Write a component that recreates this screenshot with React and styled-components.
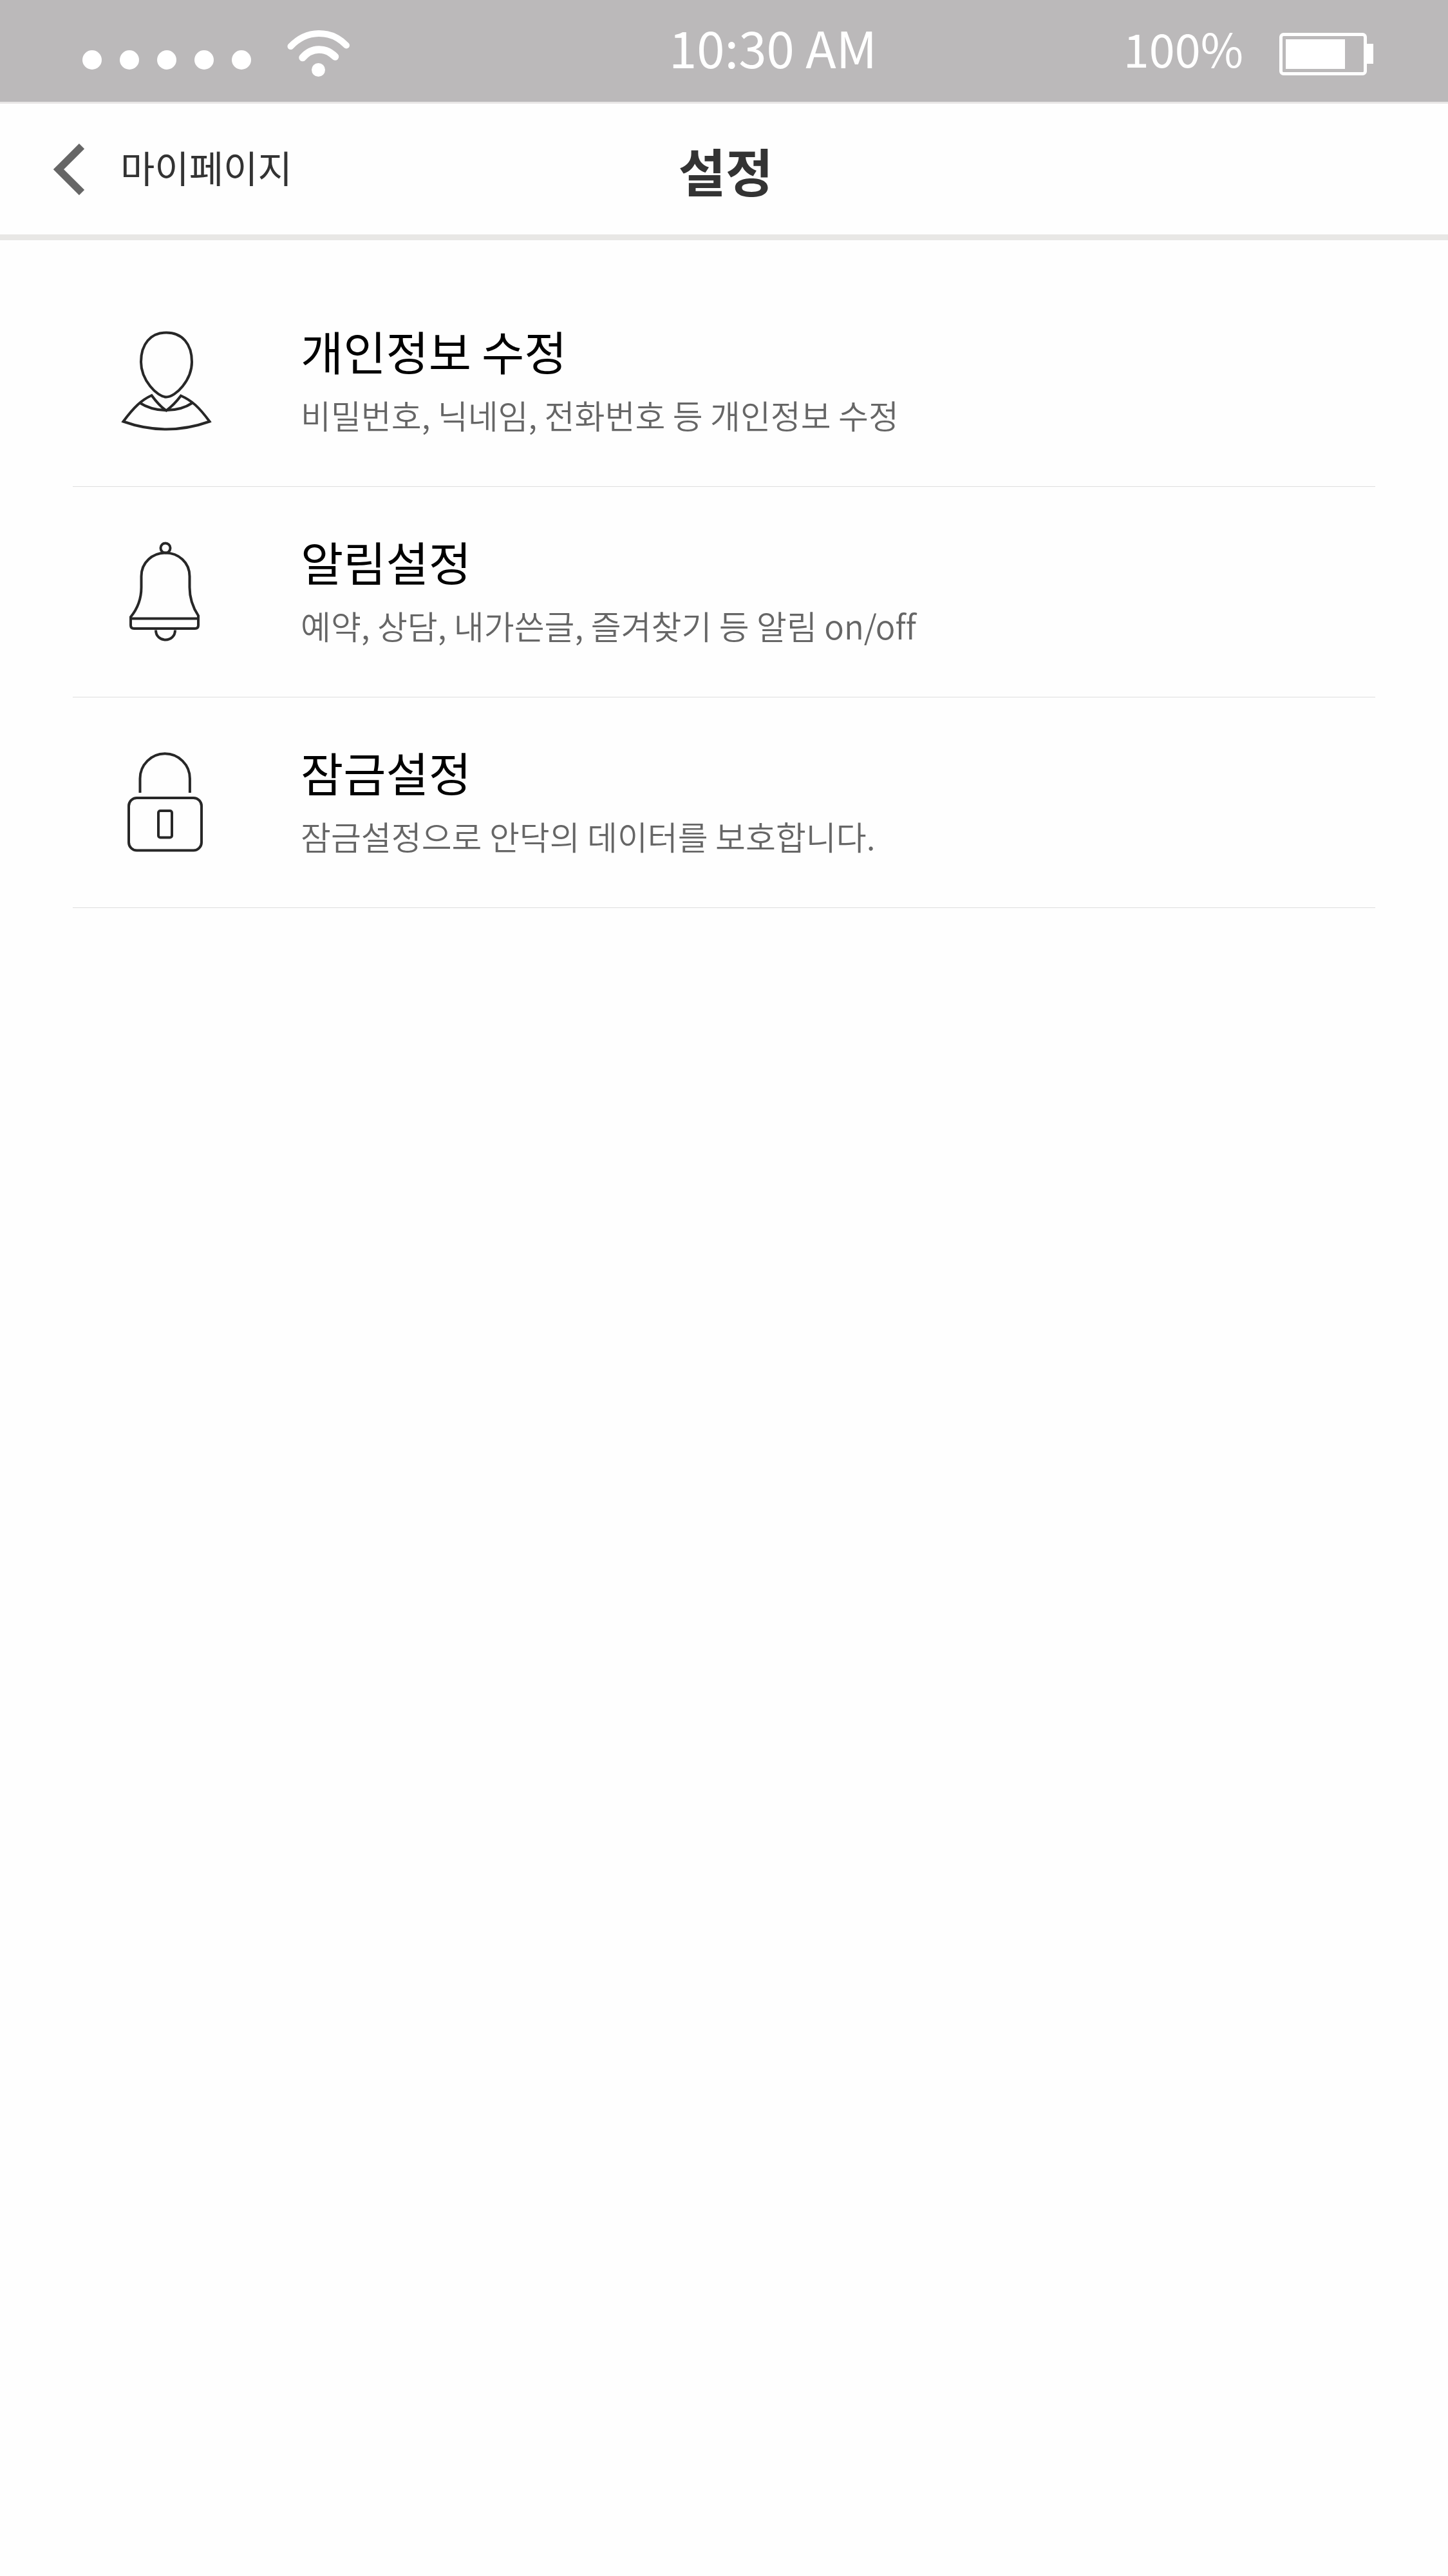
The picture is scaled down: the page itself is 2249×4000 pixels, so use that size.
import React from "react";
import styled, { createGlobalStyle } from "styled-components";

const GlobalStyle = createGlobalStyle`
  *, *::before, *::after { box-sizing: border-box; }
  body {
    margin: 0;
    background: #fefefe;
    color: #000;
    font-family: "Noto Sans CJK KR", "Noto Sans", sans-serif;
    font-variant-ligatures: none;
  }
`;

const Page = styled.div`
  min-height: 100vh;
`;

const StatusBar = styled.div`
  display: grid;
  grid-template-columns: 13fr auto 11fr;
  align-items: center;
  height: 161px;
  padding: 0 116px 0 128px;
  background: #bbb9ba;
  border-bottom: 3px solid #e8e6e6;
  color: #fff;
`;

const Signal = styled.div`
  display: flex;
  align-items: center;
  gap: 28px;
`;

const Dot = styled.span`
  width: 30px;
  height: 30px;
  margin-top: 28px;
  border-radius: 50%;
  background: #fff;
`;

const WifiIcon = styled.svg`
  display: block;
  width: 98px;
  height: 74px;
  margin-top: 8px;
  margin-left: 28px;
`;

const Clock = styled.time`
  padding-bottom: 14px;
  font-size: 78px;
  line-height: 112px;
`;

const Power = styled.div`
  display: flex;
  align-items: center;
  justify-content: flex-end;
  gap: 56px;
`;

const Percent = styled.span`
  padding-bottom: 10px;
  font-size: 72px;
  line-height: 104px;
`;

const BatteryIcon = styled.svg`
  display: block;
  width: 146px;
  height: 66px;
  margin-top: 10px;
`;

const Header = styled.header`
  display: grid;
  grid-template-columns: 1fr auto 1fr;
  align-items: center;
  height: 212px;
  padding: 0 78px 0 83px;
  border-bottom: 9px solid #e8e7e5;
  color: #333;
`;

const BackButton = styled.button`
  display: flex;
  align-items: center;
  justify-self: start;
  gap: 56px;
  padding: 0;
  border: 0;
  background: none;
  color: inherit;
  font-family: inherit;
  font-size: 58px;
  line-height: 84px;
  cursor: pointer;
`;

const BackLabel = styled.span`
  padding-bottom: 8px;
`;

const BackIcon = styled.svg`
  display: block;
  width: 48px;
  height: 80px;
`;

const Title = styled.h1`
  margin: 0;
  font-size: 80px;
  font-weight: 700;
  line-height: 116px;
`;

const SettingsList = styled.ul`
  margin: 0;
  padding: 56px 113px;
  list-style: none;
`;

const SettingsItem = styled.li`
  border-bottom: 1px solid #dedede;
`;

const SettingsLink = styled.a`
  display: grid;
  grid-template-columns: 200px 1fr;
  align-items: center;
  column-gap: 154px;
  height: 326px;
  color: inherit;
  text-decoration: none;
`;

const ItemIcon = styled.svg`
  display: block;
  width: 200px;
  height: 200px;
  margin-left: 47px;
  fill: none;
  stroke: #272727;
  stroke-width: 4;
`;

const ItemText = styled.span`
  display: block;
  padding-top: 4px;
`;

const ItemName = styled.strong`
  display: block;
  font-size: 72px;
  font-weight: 400;
  line-height: 100px;
`;

const ItemNote = styled.span`
  display: block;
  color: #666;
  font-size: 51px;
  font-weight: 350;
  line-height: 100px;
`;

function PersonDrawing() {
  return (
    <g transform="translate(0 -2)">
      <path d="M98.300 26.500C123 26.500 138 44 138 72C138 100 113 126.500 98.300 126.500C84 126.500 59 100 59 72C59 44 74 26.500 98.300 26.500Z" />
      <path d="M75.500 124C60 131 48 142 31.500 164.500Q98 188.500 165.500 164.500C149 142 138 132 121 124.500Q110 139 98.300 147.500Q88 141 75.500 124Z" />
      <path d="M57 135.500Q75 147 98.300 147Q122 147 139 135.500" />
    </g>
  );
}

function BellDrawing() {
  return (
    <g transform="translate(0 1)">
      <circle cx="97" cy="31" r="7.500" />
      <path d="M97 38.500C117 38.500 134.500 53 134.500 75V92C134.500 108 140 124 148 136V151Q148 156 143 156H48Q43 156 43 151V138C52 127 59.500 112 59.500 92V75C59.500 53 77 38.500 97 38.500Z" />
      <path d="M43 140.500H148M82 158.500C82 168 89 173.500 97 173.500C105 173.500 112 168 112 158.500" />
    </g>
  );
}

function LockDrawing() {
  return (
    <g transform="translate(0 -6)">
      <path d="M57.500 91V69A38.700 38.700 0 0 1 134.900 69V91" />
      <rect x="40" y="99" width="113" height="81.500" rx="12.500" />
      <rect x="86" y="119" width="21" height="41.500" rx="3" />
    </g>
  );
}

const settings = [
  { name: "개인정보 수정", note: "비밀번호, 닉네임, 전화번호 등 개인정보 수정", Drawing: PersonDrawing },
  { name: "알림설정", note: "예약, 상담, 내가쓴글, 즐겨찾기 등 알림 on/off", Drawing: BellDrawing },
  { name: "잠금설정", note: "잠금설정으로 안닥의 데이터를 보호합니다.", Drawing: LockDrawing },
];

export default function App() {
  return (
    <Page>
      <GlobalStyle />
      <StatusBar>
        <Signal>
          {[0, 1, 2, 3, 4].map((n) => (
            <Dot key={n} />
          ))}
          <WifiIcon viewBox="0 0 98 74" fill="none" stroke="#fff" strokeLinecap="round" aria-hidden="true">
            <path d="M5.500 26C30 0 67 -1 92 24.500" strokeWidth="10" />
            <path d="M24 43.500C38 27 60 27 74.500 42" strokeWidth="11.500" />
            <circle cx="48.500" cy="62.500" r="10.500" fill="#fff" stroke="none" />
          </WifiIcon>
        </Signal>
        <Clock>10:30 AM</Clock>
        <Power>
          <Percent>100%</Percent>
          <BatteryIcon viewBox="0 0 146 66" fill="#fff" aria-hidden="true">
            <rect x="2.500" y="2.500" width="131" height="61" rx="4" fill="none" stroke="#fff" strokeWidth="5" />
            <rect x="10" y="10" width="92" height="46" />
            <rect x="135" y="17" width="11" height="31" />
          </BatteryIcon>
        </Power>
      </StatusBar>
      <Header>
        <BackButton type="button">
          <BackIcon viewBox="0 0 48 80" fill="none" stroke="#666" strokeWidth="11.500" aria-hidden="true">
            <path d="M44 4L8 40L44 76" />
          </BackIcon>
          <BackLabel>마이페이지</BackLabel>
        </BackButton>
        <Title>설정</Title>
      </Header>
      <main>
        <SettingsList>
          {settings.map(({ name, note, Drawing }) => (
            <SettingsItem key={name}>
              <SettingsLink href="#">
                <ItemIcon viewBox="0 0 200 200" aria-hidden="true">
                  <Drawing />
                </ItemIcon>
                <ItemText>
                  <ItemName>{name}</ItemName>
                  <ItemNote>{note}</ItemNote>
                </ItemText>
              </SettingsLink>
            </SettingsItem>
          ))}
        </SettingsList>
      </main>
    </Page>
  );
}
